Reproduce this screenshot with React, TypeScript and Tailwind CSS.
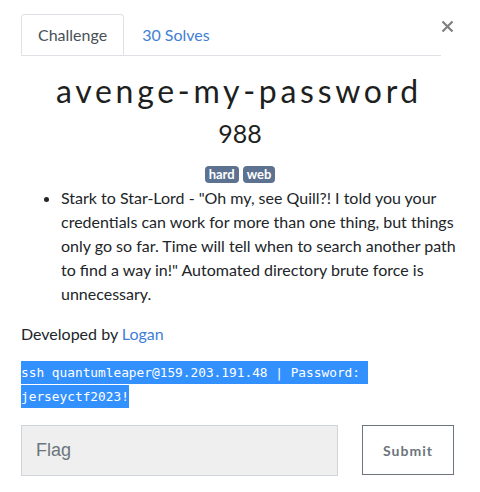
import React from "react";

export default function App() {
  return (
    <div className="relative w-[480px] h-[492px] bg-white text-[#212529] font-['Lato','Noto_Sans',sans-serif] overflow-hidden">
      <button className="absolute left-[440px] top-[19px] w-[15px] h-[15px] flex items-center justify-center" aria-label="Close">
        <svg width="13" height="13" viewBox="0 0 13 13">
          <path d="M1.5 1.5 L11.5 11.5 M11.5 1.5 L1.5 11.5" stroke="#7f7f7f" strokeWidth="2.2" strokeLinecap="butt" />
        </svg>
      </button>
      <div className="pl-[21px] pr-[21px] pt-[14px]">
        <div className="flex w-[420px] border-b border-[#dee2e6]">
          <div className="-mb-px px-4 h-[41px] flex items-center border border-[#dee2e6] border-b-white rounded-t-[4px] text-[16px] text-[#495057] bg-white">
            Challenge
          </div>
          <div className="ml-[2px] px-4 h-[41px] flex items-center text-[16px] text-[#3f80d6]">30 Solves</div>
        </div>
        <div className="mt-[17px] h-[36px] pr-[2px] flex items-center justify-center text-[32px] tracking-[3.7px] text-[#1d1f21]">
          avenge-my-password
        </div>
        <div className="mt-[10px] h-[30px] flex items-center justify-center text-[25px] text-[#1d1f21]">988</div>
        <div className="mt-[17px] h-[16px] flex justify-center gap-[4px]">
          <span className="px-[4px] h-[17px] flex items-center rounded-[4px] bg-[#5c7290] text-white text-[13px] font-bold">hard</span>
          <span className="px-[4px] h-[17px] flex items-center rounded-[4px] bg-[#5c7290] text-white text-[13px] font-bold">web</span>
        </div>
        <ul className="mt-[4px] pl-[40px] list-disc text-[16px] leading-[24px] marker:text-[#212529]">
          <li>
            Stark to Star-Lord - "Oh my, see Quill?! I told you your
            <br />
            credentials can work for more than one thing, but things
            <br />
            only go so far. Time will tell when to search another path
            <br />
            to find a way in!" Automated directory brute force is
            <br />
            unnecessary.
          </li>
        </ul>
        <p className="mt-[16px] text-[16px] leading-[24px]">
          Developed by <span className="text-[#3f80d6]">Logan</span>
        </p>
        <p className="mt-[15px] text-[12.8px] leading-[24px] font-['DejaVu_Sans_Mono',monospace] text-white">
          <span className="bg-[#3390ff] py-[4px]">ssh quantumleaper@159.203.191.48 | Password:{"\u00a0"}</span>
          <br />
          <span className="bg-[#3390ff] py-[4px]">jerseyctf2023!</span>
        </p>
        <div className="mt-[16px] flex items-start">
          <div className="w-[317px] h-[51px] bg-[#efefef] border border-[#ced4da] flex items-center pl-[14px] text-[18px] text-[#6c757d] font-['Liberation_Sans',Arial,sans-serif]">
            Flag
          </div>
          <button className="ml-[24px] w-[92px] h-[50px] border border-[#6c757d] bg-white text-[#6c757d] text-[14px] font-bold tracking-[1px]">
            Submit
          </button>
        </div>
      </div>
    </div>
  );
}
